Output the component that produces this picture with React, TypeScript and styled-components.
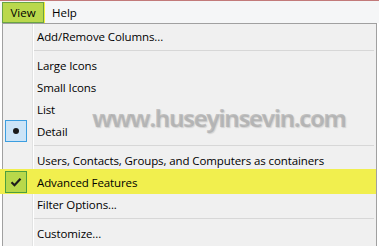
import React from "react";
import styled, { createGlobalStyle, css } from "styled-components";

const GlobalStyle = createGlobalStyle`
  html, body {
    margin: 0;
    padding: 0;
    background: #ffffff;
    overflow: hidden;
  }
  * {
    box-sizing: border-box;
  }
`;

const Screen = styled.div`
  position: relative;
  width: 379px;
  height: 246px;
  overflow: hidden;
  font-family: "Open Sans", "Noto Sans", sans-serif;
  font-size: 11.5px;
  color: #000;
`;

const MenuBar = styled.div`
  display: flex;
  align-items: center;
  height: 23px;
  padding: 0 2px;
  background: #f5f6f7;
  border-top: 1px solid #c27a7a;
`;

const BarItem = styled.div<{ $open?: boolean }>`
  display: flex;
  align-items: center;
  height: 21px;
  padding: 0 8px;
  ${(p) =>
    p.$open &&
    css`
      width: 42px;
      justify-content: center;
      background: #bad84c;
      border: 1px solid #6aa443;
      box-shadow: 1px 0 0 #f3ef3c;
    `}
`;

const Body = styled.div`
  display: flex;
  height: 223px;
`;

const Edge = styled.div<{ $w: number }>`
  width: ${(p) => p.$w}px;
  flex-shrink: 0;
  background: #ffffff;
`;

const Popup = styled.div`
  flex: 1;
  padding: 1px 0 0;
  border: 1px solid #a0a0a0;
  border-bottom: none;
  background: linear-gradient(
    to right,
    #f0f0f0 29px,
    #e2e3e3 29px,
    #e2e3e3 30px,
    #ffffff 30px,
    #ffffff 31px,
    #f0f0f0 31px
  );
`;

const Item = styled.div<{ $marked?: boolean }>`
  position: relative;
  display: flex;
  align-items: center;
  height: 22px;
  ${(p) =>
    p.$marked &&
    css`
      &::before {
        content: "";
        position: absolute;
        top: -2px;
        bottom: -1px;
        left: -3px;
        right: 0;
        background: #f1ef4e;
      }
    `}
`;

const IconCell = styled.div`
  position: relative;
  width: 34px;
  height: 100%;
  flex-shrink: 0;
  display: flex;
  align-items: center;
  padding-left: 2px;
`;

const Check = styled.div<{ $tone: "blue" | "green" }>`
  width: 22px;
  height: 22px;
  display: flex;
  align-items: center;
  justify-content: center;
  ${(p) =>
    p.$tone === "blue"
      ? css`
          background: #cce4f7;
          border: 1px solid #3c9ee0;
        `
      : css`
          background: #b8d84a;
          border: 1px solid #4c9f3e;
        `}
`;

const Dot = styled.span`
  width: 6px;
  height: 6px;
  border-radius: 50%;
  background: #1a1a1a;
`;

const Label = styled.span`
  position: relative;
  white-space: nowrap;
  letter-spacing: -0.1px;
`;

const Separator = styled.div`
  height: 7px;
  margin-left: 31px;
  margin-right: 2px;
  padding-top: 3px;
  &::after {
    content: "";
    display: block;
    height: 1px;
    background: #d7d7d7;
  }
`;

const Watermark = styled.div`
  position: absolute;
  left: 92px;
  top: 101px;
  font-family: "Open Sans", "Noto Sans", sans-serif;
  font-weight: 700;
  font-size: 24px;
  letter-spacing: -1.5px;
  color: rgba(155, 155, 155, 0.55);
  text-shadow: 1px 1px 1px rgba(120, 120, 120, 0.25);
  pointer-events: none;
`;

const CheckMark = () => (
  <svg width="12" height="10" viewBox="0 0 12 10">
    <path d="M1.5 5.2 L4.5 8.2 L10.5 1.8" fill="none" stroke="#1c1c1c" strokeWidth="2.2" />
  </svg>
);

type Row =
  | { kind: "item"; label: string; mark?: "dot" | "check" }
  | { kind: "sep" };

const rows: Row[] = [
  { kind: "item", label: "Add/Remove Columns..." },
  { kind: "sep" },
  { kind: "item", label: "Large Icons" },
  { kind: "item", label: "Small Icons" },
  { kind: "item", label: "List" },
  { kind: "item", label: "Detail", mark: "dot" },
  { kind: "sep" },
  { kind: "item", label: "Users, Contacts, Groups, and Computers as containers" },
  { kind: "item", label: "Advanced Features", mark: "check" },
  { kind: "item", label: "Filter Options..." },
  { kind: "sep" },
  { kind: "item", label: "Customize..." },
];

const App = () => {
  return (
    <Screen>
      <GlobalStyle />
      <MenuBar>
        <BarItem $open>View</BarItem>
        <BarItem>Help</BarItem>
      </MenuBar>
      <Body>
        <Edge $w={2} />
        <Popup>
          {rows.map((r, i) =>
            r.kind === "sep" ? (
              <Separator key={i} />
            ) : (
              <Item key={i} $marked={r.mark === "check"}>
                <IconCell>
                  {r.mark === "dot" && (
                    <Check $tone="blue">
                      <Dot />
                    </Check>
                  )}
                  {r.mark === "check" && (
                    <Check $tone="green">
                      <CheckMark />
                    </Check>
                  )}
                </IconCell>
                <Label>{r.label}</Label>
              </Item>
            )
          )}
        </Popup>
        <Edge $w={2} />
      </Body>
      <Watermark>www.huseyinsevin.com</Watermark>
    </Screen>
  );
};

export default App;
